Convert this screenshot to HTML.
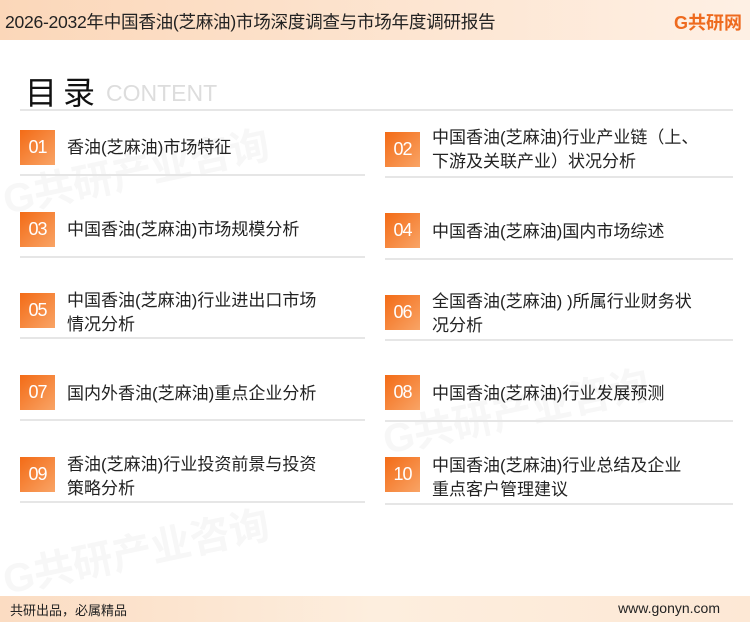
<!DOCTYPE html>
<html><head><meta charset="utf-8"><style>
*{margin:0;padding:0;box-sizing:border-box}
body{width:750px;height:622px;position:relative;background:#fff;font-family:"Liberation Sans","Noto Sans CJK SC",sans-serif;overflow:hidden}
.hd{position:absolute;left:0;top:0;width:750px;height:40px;background:linear-gradient(90deg,#fbd7b9,#fde6d3 60%,#fef0e4)}
.hd .t{position:absolute;left:5px;top:9px;font-size:17.6px;color:#222;letter-spacing:-0.3px}
.logo{position:absolute;right:8px;top:9px;font-size:18px;font-weight:bold;color:#ee6a1e}
.ft{position:absolute;left:0;top:596px;width:750px;height:26px;background:linear-gradient(90deg,#fbdcc2,#fdeede 50%,#fde8d5)}
.ft .a{position:absolute;left:10px;top:4px;font-size:13px;color:#222}
.ft .b{position:absolute;right:30px;top:4px;font-size:14px;color:#222}
.ml{position:absolute;left:25px;top:68px;font-size:32px;color:#111;letter-spacing:6px}
.ct{position:absolute;left:106px;top:80px;font-size:23px;color:#ddd}
.hr{position:absolute;height:2px;background:#e6e6e6}
.bx{position:absolute;width:35px;height:35px;background:linear-gradient(135deg,#f36b16,#f9a466);color:#fff;font-size:18px;text-align:center;line-height:35px;letter-spacing:-1px}
.tx{position:absolute;font-size:17px;color:#222;line-height:24px;white-space:nowrap}
.wm{position:absolute;color:#f7f7f7;font-weight:bold;font-size:40px;transform:rotate(-12deg);white-space:nowrap}
</style></head><body>
<div class="wm" style="left:0;top:140px">G共研产业咨询</div>
<div class="wm" style="left:380px;top:380px">G共研产业咨询</div>
<div class="wm" style="left:0;top:520px">G共研产业咨询</div>
<div class="hd"><div class="t">2026-2032年中国香油(芝麻油)市场深度调查与市场年度调研报告</div><div class="logo">G共研网</div></div>
<div class="ml">目录</div><div class="ct">CONTENT</div>
<div class="hr" style="left:20px;top:109px;width:713px"></div>

<div class="bx" style="left:20px;top:130px">01</div><div class="tx" style="left:67px;top:136px">香油(芝麻油)市场特征</div>
<div class="hr" style="left:20px;top:174px;width:345px"></div>
<div class="bx" style="left:385px;top:132px">02</div><div class="tx" style="left:432px;top:126px">中国香油(芝麻油)行业产业链（上、<br>下游及关联产业）状况分析</div>
<div class="hr" style="left:385px;top:176px;width:348px"></div>

<div class="bx" style="left:20px;top:212px">03</div><div class="tx" style="left:67px;top:218px">中国香油(芝麻油)市场规模分析</div>
<div class="hr" style="left:20px;top:256px;width:345px"></div>
<div class="bx" style="left:385px;top:213px">04</div><div class="tx" style="left:432px;top:220px">中国香油(芝麻油)国内市场综述</div>
<div class="hr" style="left:385px;top:258px;width:348px"></div>

<div class="bx" style="left:20px;top:293px">05</div><div class="tx" style="left:67px;top:289px">中国香油(芝麻油)行业进出口市场<br>情况分析</div>
<div class="hr" style="left:20px;top:337px;width:345px"></div>
<div class="bx" style="left:385px;top:295px">06</div><div class="tx" style="left:432px;top:290px">全国香油(芝麻油) )所属行业财务状<br>况分析</div>
<div class="hr" style="left:385px;top:339px;width:348px"></div>

<div class="bx" style="left:20px;top:375px">07</div><div class="tx" style="left:67px;top:382px">国内外香油(芝麻油)重点企业分析</div>
<div class="hr" style="left:20px;top:419px;width:345px"></div>
<div class="bx" style="left:385px;top:375px">08</div><div class="tx" style="left:432px;top:382px">中国香油(芝麻油)行业发展预测</div>
<div class="hr" style="left:385px;top:420px;width:348px"></div>

<div class="bx" style="left:20px;top:457px">09</div><div class="tx" style="left:67px;top:453px">香油(芝麻油)行业投资前景与投资<br>策略分析</div>
<div class="hr" style="left:20px;top:501px;width:345px"></div>
<div class="bx" style="left:385px;top:457px">10</div><div class="tx" style="left:432px;top:454px">中国香油(芝麻油)行业总结及企业<br>重点客户管理建议</div>
<div class="hr" style="left:385px;top:503px;width:348px"></div>

<div class="ft"><div class="a">共研出品，必属精品</div><div class="b">www.gonyn.com</div></div>
</body></html>
